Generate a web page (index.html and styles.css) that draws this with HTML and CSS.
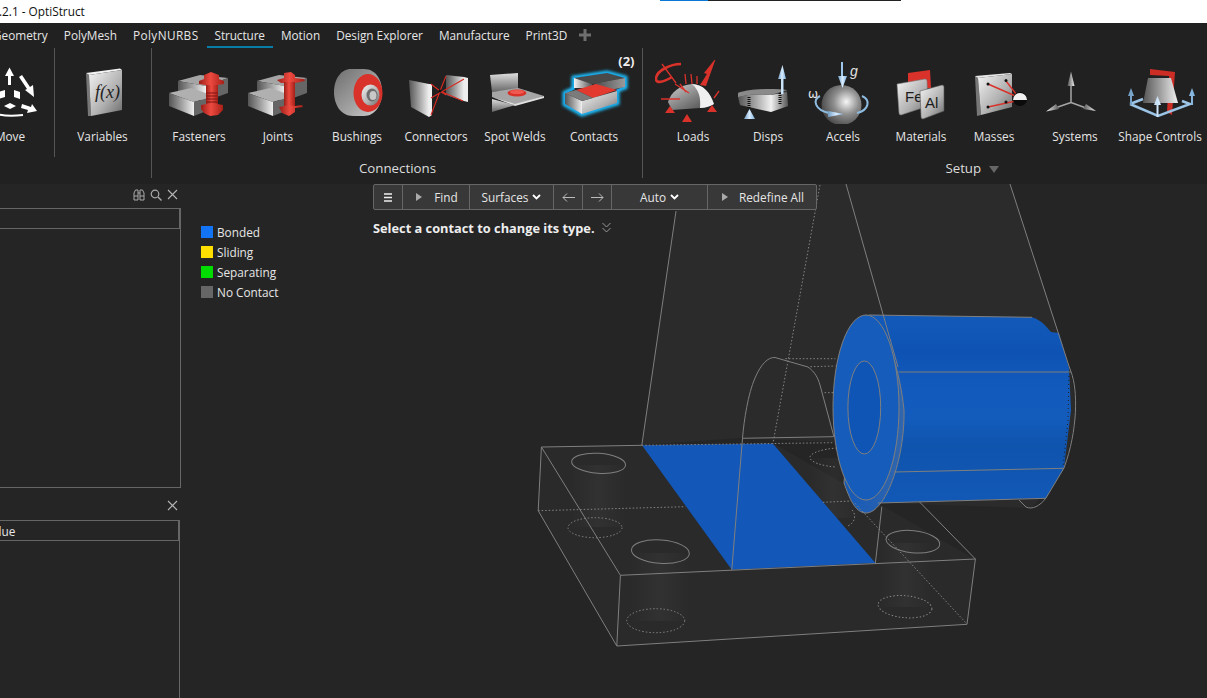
FILE: index.html
```html
<!DOCTYPE html>
<html lang="en">
<head>
<meta charset="utf-8">
<title>OptiStruct</title>
<link rel="stylesheet" href="styles.css">
</head>
<body>
<svg class="defs" width="0" height="0" aria-hidden="true">
  <defs>
    <linearGradient id="gh" x1="0" x2="1" y1="0" y2="0"><stop offset="0" stop-color="#555"/><stop offset=".55" stop-color="#a8a8a8"/><stop offset="1" stop-color="#f0f0f0"/></linearGradient>
    <linearGradient id="gr" x1="0" x2="1" y1="0" y2="0"><stop offset="0" stop-color="#f2f2f2"/><stop offset=".5" stop-color="#a5a5a5"/><stop offset="1" stop-color="#555"/></linearGradient>
    <linearGradient id="gv" x1="0" x2="0" y1="0" y2="1"><stop offset="0" stop-color="#dedede"/><stop offset="1" stop-color="#666"/></linearGradient>
    <linearGradient id="gd" x1="0" x2="1" y1="0" y2="1"><stop offset="0" stop-color="#f4f4f4"/><stop offset=".6" stop-color="#b0b0b0"/><stop offset="1" stop-color="#6a6a6a"/></linearGradient>
    <linearGradient id="gb" x1="0" x2="1" y1="0" y2="1"><stop offset="0" stop-color="#6e6e6e"/><stop offset=".6" stop-color="#a4a4a4"/><stop offset="1" stop-color="#d2d2d2"/></linearGradient>
    <linearGradient id="gt" x1="0" x2="1" y1="0" y2="0"><stop offset="0" stop-color="#444"/><stop offset="1" stop-color="#9a9a9a"/></linearGradient>
    <linearGradient id="dome" x1="0" x2="1" y1="0" y2="1"><stop offset="0" stop-color="#cfcfcf"/><stop offset=".55" stop-color="#7e7e7e"/><stop offset="1" stop-color="#454545"/></linearGradient>
    <linearGradient id="red" x1="0" x2="1" y1="0" y2="0"><stop offset="0" stop-color="#9a1e17"/><stop offset=".45" stop-color="#ee4a40"/><stop offset="1" stop-color="#a52018"/></linearGradient>
    <linearGradient id="blue" x1="0" x2="1" y1="0" y2="0"><stop offset="0" stop-color="#6f9cc4"/><stop offset=".5" stop-color="#d8ecff"/><stop offset="1" stop-color="#7fb0da"/></linearGradient>
    <radialGradient id="sph" cx=".62" cy=".42" r=".7"><stop offset="0" stop-color="#f6f6f6"/><stop offset=".45" stop-color="#8e8e8e"/><stop offset="1" stop-color="#3d3d3d"/></radialGradient>
    <linearGradient id="hole" x1="0" x2="1" y1="0" y2="0"><stop offset="0" stop-color="#fff" stop-opacity="0"/><stop offset=".5" stop-color="#fff" stop-opacity=".035"/><stop offset="1" stop-color="#fff" stop-opacity="0"/></linearGradient>
    <linearGradient id="rim" x1="0" x2="1" y1="0" y2="0"><stop offset="0" stop-color="#1459b8"/><stop offset="1" stop-color="#3166ad"/></linearGradient>
    <linearGradient id="bodyShade" x1="0" x2="0" y1="0" y2="1"><stop offset="0" stop-color="#125ab9"/><stop offset=".2" stop-color="#0e53b4"/><stop offset=".4" stop-color="#125bbd"/><stop offset=".55" stop-color="#135cbc"/><stop offset=".7" stop-color="#0f54ad"/><stop offset="1" stop-color="#1258b6"/></linearGradient>
    <filter id="glow" x="-30%" y="-30%" width="160%" height="160%"><feGaussianBlur stdDeviation="1.800"/></filter>
    <g id="blocks">
      <path d="M178 81 200 75 228 78 206 86Z" fill="#a5a5a5"/>
      <path d="M178 81 206 86V101L178 94Z" fill="url(#gh)"/>
      <path d="M206 86 228 78V93L206 101Z" fill="#666"/>
      <path d="M169 93 191 88 214 96 194 102Z" fill="#b0b0b0"/>
      <path d="M169 93 194 102V116L169 106Z" fill="url(#gh)"/>
      <path d="M194 102 214 96V108L194 116Z" fill="#666"/>
    </g>
  </defs>
</svg>

<header class="titlebar">
  <span class="title">.2.1 - OptiStruct</span>
  <span class="progress"><span class="progress-fill"></span></span>
</header>

<nav class="tabs">
  <span class="tab">Geometry</span>
  <span class="tab">PolyMesh</span>
  <span class="tab tab-wide">PolyNURBS</span>
  <span class="tab tab-active">Structure</span>
  <span class="tab">Motion</span>
  <span class="tab">Design Explorer</span>
  <span class="tab">Manufacture</span>
  <span class="tab">Print3D</span>
  <svg class="tab-plus" width="12" height="12" viewBox="0 0 12 12"><path d="M6 0V12M0 6H12" stroke="#6f6f6f" stroke-width="3"/></svg>
</nav>

<section class="ribbon">
  <div class="group group-move">
    <div class="tool">
      <svg class="icon" width="76" height="64" viewBox="-28 60 76 64">
        <path d="M9.500 67.500 14 76H11V85H8V76H5Z" fill="#fff"/>
        <path d="M19 77 22 75 30 87 33 85 34 97 25 90 27 89Z" fill="#fff"/>
        <path d="M-2 92 5 90V97L-2 99ZM14 90 20 92V99L14 97Z" fill="#fff"/>
        <path d="M10 103 16 106 10 109 4 106Z" fill="#fff"/>
        <path d="M22 104 31 107 32 104 37 111 27 113 28 110 21 108Z" fill="#fff"/>
        <path d="M-3 114C4 116 14 116 23 115" fill="none" stroke="#fff" stroke-width="2"/>
      </svg>
      <span class="tool-label">Move</span>
    </div>
  </div>
  <div class="group group-vars">
    <div class="tool">
      <svg class="icon" width="76" height="64" viewBox="64 60 76 64">
        <path d="M85 73 119 68.500 121 70 88 75Z" fill="#f2f2f2"/>
        <path d="M85 73 88 75 90 116 87 116Z" fill="#777"/>
        <path d="M88 75 121 70V110L90 116Z" fill="url(#gd)"/>
        <text class="fx" x="94" y="98">f(x)</text>
      </svg>
      <span class="tool-label">Variables</span>
    </div>
  </div>
  <div class="group group-conn">
    <div class="tools tools-conn">
      <div class="tool">
        <svg class="icon" width="76" height="64" viewBox="161 60 76 64">
          <use href="#blocks"/>
          <path d="M204 75 211 72 219 75V79L224 81V84L211 86 199 84V81L204 79Z" fill="url(#red)"/>
          <rect x="206" y="85" width="12" height="20" fill="url(#red)"/>
          <path d="M206 93H218M206 96H218M206 99H218M206 102H218" stroke="#7d1510" stroke-width="1"/>
          <path d="M201 105 212 103 223 105V110L218 115 210 116 204 113 201 109Z" fill="url(#red)"/>
        </svg>
        <span class="tool-label">Fasteners</span>
      </div>
      <div class="tool">
        <svg class="icon" width="76" height="64" viewBox="241 60 76 64">
          <use href="#blocks" x="80"/>
          <path d="M285 73 292 72 296 75V78L305 79 306 81 296 83H282L278 80 285 78Z" fill="url(#red)"/>
          <rect x="285" y="82" width="11" height="24" fill="url(#red)"/>
          <path d="M280 107 290 105 296 106 303 105 304 107 296 108V112L290 116 283 113Z" fill="url(#red)"/>
        </svg>
        <span class="tool-label">Joints</span>
      </div>
      <div class="tool">
        <svg class="icon" width="76" height="64" viewBox="320 60 76 64">
          <path d="M352 69H365C377 69 383 80 383 92 383 105 376 116 365 116H354C342 116 335 105 335 92 335 79 342 69 352 69Z" fill="url(#gb)"/>
          <ellipse cx="369" cy="93" rx="14.500" ry="19" fill="#d8322a"/>
          <ellipse cx="371.500" cy="95" rx="9" ry="10.500" fill="url(#gd)"/>
          <ellipse cx="373" cy="95" rx="5.500" ry="6.500" fill="#6d6d6d"/>
          <ellipse cx="374" cy="95.500" rx="3.500" ry="4.500" fill="#c8c8c8"/>
        </svg>
        <span class="tool-label">Bushings</span>
      </div>
      <div class="tool">
        <svg class="icon" width="76" height="64" viewBox="399 60 76 64">
          <path d="M410 80 430 84V117L412 107Z" fill="url(#gh)"/>
          <path d="M430 84 433 84V115L430 117Z" fill="#eee"/>
          <path d="M447 75 465 77V101L447 95Z" fill="url(#gh)"/>
          <path d="M465 77 469 78V102L465 101Z" fill="#eee"/>
          <path d="M432 84 441 91 447 76M432 115 441 91 447 95M432 98 465 79M441 91 464 101" fill="none" stroke="#d82a22" stroke-width="1.100"/>
          <circle cx="441" cy="91" r="1.500" fill="#111"/>
        </svg>
        <span class="tool-label">Connectors</span>
      </div>
      <div class="tool">
        <svg class="icon" width="76" height="64" viewBox="477 60 76 64">
          <path d="M490 75 518 73V90L492 92Z" fill="url(#gv)"/>
          <path d="M492 92 518 88 544 96 515 105 492 97Z" fill="#a6a6a6"/>
          <path d="M492 97 515 104 544 96V98L515 106Z" fill="#e0e0e0"/>
          <path d="M492 99 515 105 492 112Z" fill="url(#gv)"/>
          <ellipse cx="517" cy="93" rx="9.500" ry="3.500" fill="#d8322a"/>
          <ellipse cx="517" cy="92" rx="7" ry="2" fill="#ef5a50"/>
        </svg>
        <span class="tool-label">Spot Welds</span>
      </div>
      <div class="tool">
        <svg class="icon" width="76" height="64" viewBox="556 60 76 64">
          <path d="M574 78 607 73 625 78V87L617 90V103L582 114 565 104V93L574 89Z" fill="#1cc0ff" stroke="#1cc0ff" stroke-width="5" filter="url(#glow)"/>
          <path d="M574 78 607 73 625 78V87L617 90V103L582 114 565 104V93L574 89Z" fill="#2a2a2a" stroke="#19a5e8" stroke-width="1.400"/>
          <path d="M574 78 607 73 625 78 592 84Z" fill="#4a4a4a"/>
          <path d="M574 78 592 84 592 88 574 88Z" fill="url(#gr)"/>
          <path d="M592 84 625 78V87L610 90Z" fill="url(#gt)"/>
          <path d="M576 90 596 84 617 90 593 98Z" fill="#e33a30"/>
          <path d="M565 93 582 101V114L565 104Z" fill="url(#gh)"/>
          <path d="M582 101 617 91V103L582 114Z" fill="url(#gd)"/>
          <path d="M565 93 576 90 593 98 582 101Z" fill="#7b7b7b"/>
        </svg>
        <span class="tool-label">Contacts</span>
        <span class="badge">(2)</span>
      </div>
    </div>
    <div class="group-label">Connections</div>
  </div>
  <div class="group group-setup">
    <div class="tools tools-setup">
      <div class="tool">
        <svg class="icon" width="76" height="64" viewBox="655 60 76 64">
          <path d="M668 102C671 92 680 85 692 84 701 84 708 90 714 104L700 108 672 110Z" fill="url(#dome)"/>
          <path d="M714 104C710 92 704 85 692 84 699 90 701 98 700 108 706 108 711 106 714 104Z" fill="#efefef"/>
          <path d="M681 64C670 64 656 71 656 79 656 84 664 82 672 77" fill="none" stroke="#d8322a" stroke-width="2.600"/>
          <path d="M716 58 706 86 700 85 707 74 704 73Z" fill="#d8322a"/>
          <path d="M662 64 676 83M675 84 689 93M680 84 686 92M685 74 686 84M691 74 692 84M697 76 697 84M661 99H680M714 98 719 91" stroke="#d8322a" stroke-width="1.300"/>
          <path d="M670 106 675 113H665ZM687 114 692 122H682ZM712 105 717 112H707Z" fill="#d8322a"/>
        </svg>
        <span class="tool-label">Loads</span>
      </div>
      <div class="tool">
        <svg class="icon" width="76" height="64" viewBox="730 60 76 64">
          <path d="M738 93C748 89 770 88 787 90L788 106 771 112 740 105Z" fill="#3a3a3a"/>
          <path d="M738 97C748 94 760 94 771 95L771 112 740 105Z" fill="url(#gh)"/>
          <path d="M771 95 787 92 788 106 771 112Z" fill="url(#gr)"/>
          <path d="M738 93C748 89 770 88 787 90L771 95C760 94 748 94 738 97Z" fill="#8a8a8a"/>
          <path d="M749 97V109M780 93V105" stroke="#111" stroke-width="3" stroke-dasharray="1 1"/>
          <path d="M782.500 65 786 79H783.500V94H781V79H778Z" fill="url(#blue)"/>
          <path d="M749.500 109 755 119H744Z" fill="url(#blue)"/>
        </svg>
        <span class="tool-label">Disps</span>
      </div>
      <div class="tool">
        <svg class="icon" width="76" height="64" viewBox="805 60 76 64">
          <circle cx="841.500" cy="105" r="20" fill="url(#sph)"/>
          <path d="M820 96C812 100 815 110 829 113M862 96C871 100 869 110 857 113" fill="none" stroke="#8dbbe0" stroke-width="2"/>
          <path d="M828 111 844 114 828 117Z" fill="url(#blue)"/>
          <path d="M842 62V78" stroke="#9cc6ea" stroke-width="2"/>
          <path d="M838 76H847L842.500 88Z" fill="url(#blue)"/>
          <text class="sym" x="850" y="76">g</text>
          <text class="omega" x="808" y="98">ω</text>
        </svg>
        <span class="tool-label">Accels</span>
      </div>
      <div class="tool">
        <svg class="icon" width="76" height="64" viewBox="883 60 76 64">
          <path d="M908 73 930 70 931 88 908 88Z" fill="#d8322a"/>
          <path d="M897 84 925 79Q927 79 927 81L928 106 901 115Q899 115 899 113Z" fill="url(#gd)" stroke="#777" stroke-width=".6"/>
          <text class="plate" x="905" y="102">Fe</text>
          <path d="M920 91 942 85Q944 85 944 87V111L923 119Q921 119 921 117Z" fill="url(#gd)" stroke="#555" stroke-width=".6"/>
          <text class="plate" x="925" y="108">Al</text>
        </svg>
        <span class="tool-label">Materials</span>
      </div>
      <div class="tool">
        <svg class="icon" width="76" height="64" viewBox="956 60 76 64">
          <path d="M975 76 978 78 981 115 977 116Z" fill="#777"/>
          <path d="M975 76 1010 73 1012 74 978 78Z" fill="#e8e8e8"/>
          <path d="M978 78 1012 74V107L981 115Z" fill="url(#gd)"/>
          <path d="M988 84 1020 98M1006 81 1020 99M988 107 1020 100" stroke="#d8322a" stroke-width="1.400"/>
          <circle cx="988" cy="84" r="1.500" fill="#111"/><circle cx="1006" cy="80.500" r="1.500" fill="#111"/><circle cx="988" cy="107" r="1.500" fill="#111"/><circle cx="1006" cy="102" r="1.500" fill="#111"/>
          <circle cx="1020" cy="99" r="7" fill="#0b0b0b"/>
          <path d="M1013 100A7 7 0 0 1 1027 100Z" fill="#f2f2f2"/>
        </svg>
        <span class="tool-label">Masses</span>
      </div>
      <div class="tool">
        <svg class="icon" width="76" height="64" viewBox="1037 60 76 64">
          <path d="M1071 102.500V85M1071 102.500 1055 108M1071 102.500 1086 108" stroke="#a5a5a5" stroke-width="1.500"/>
          <path d="M1071 71.500 1074.500 86H1067.500Z" fill="url(#gh)"/>
          <path d="M1046 111.500 1056 104 1059 109Z" fill="url(#gr)"/>
          <path d="M1096 111 1083 109 1086 104Z" fill="url(#gh)"/>
        </svg>
        <span class="tool-label">Systems</span>
      </div>
      <div class="tool">
        <svg class="icon" width="76" height="64" viewBox="1122 60 76 64">
          <path d="M1150 69 1175 72 1172 115 1167 112 1169 76 1150 75Z" fill="#cc2e26"/>
          <path d="M1148 78H1171L1178 103H1143Z" fill="url(#gh)"/>
          <path d="M1130 104 1158 116 1190 104 1182 101M1130 104 1143 99" fill="none" stroke="#9cc4e6" stroke-width="2.500"/>
          <path d="M1131 88 1134 96H1132V105H1130V96H1128ZM1192 88 1195 96H1193V105H1191V96H1189ZM1157.500 96 1161 105H1158.500V117H1156.500V105H1154Z" fill="url(#blue)"/>
        </svg>
        <span class="tool-label">Shape Controls</span>
      </div>
    </div>
    <div class="group-label group-label-setup">Setup <span class="caret"></span></div>
  </div>
</section>

<main class="main">
  <svg class="model" width="1207" height="514" viewBox="0 184 1207 514" aria-hidden="true">
    <path d="M680 184H1010L1070 370 1077 413 1064 468 1032 508 878 503 833 442 742 438 642 445Z" fill="#2b2b2b"/>
    <path d="M541 447 642 445 773 443 975 559 967 624 617 646 538 511Z" fill="#2a2a2a"/>
    <rect x="571" y="465" width="55" height="62" fill="url(#hole)"/>
    <rect x="630" y="553" width="60" height="68" fill="url(#hole)"/>
    <rect x="879" y="543" width="53" height="64" fill="url(#hole)"/>
    <rect x="808" y="458" width="52" height="60" fill="url(#hole)"/>
    <path d="M642 445.300 773 443.700 875.400 563 731.800 569.700Z" fill="#1358b8"/>
    <path d="M866 315 1032 317.300C1042 320 1047 328 1051 332L1059 333 1069 368 1071 410 1064 468 1046 498 878 503 866 500Z" fill="url(#bodyShade)"/>
    <path d="M1069 372 1068 420 1063 467" fill="none" stroke="#222" stroke-dasharray="1 3"/>
    <path d="M866 315C885 320 900 370 904 410 905 460 885 513 866 513 855 513 849 497 844 483L850 407Z" fill="url(#rim)" stroke="#7f7f7f"/>
    <ellipse cx="866" cy="407.500" rx="33" ry="92.500" fill="#165dbb"/>
    <ellipse cx="864.300" cy="407.500" rx="16.400" ry="46.500" fill="#0f55b6"/>
    <g fill="none" stroke="#7f7f7f" stroke-width="1">
      <path d="M676 211 641.800 445.300M846 184 898 367M1010 184 1069.300 367"/>
      <path d="M541.400 447 641.800 445.300M541.400 447 538.200 510.700 616.800 646 967 624.300 975.400 559 620.400 575.300 616.800 646M541.400 447 620.400 575.300M975.400 559 919.300 501.700"/>
      <path d="M731.800 569.700 742.500 438.300 833.600 436.700M742.500 438.300C744 420 748 394 755 378 761 364 768 357 775 357.500L808 367C815 372 818 378 820 385L834 437"/>
      <path d="M875.400 563 881.800 506.700"/>
      <ellipse cx="866" cy="407.500" rx="33" ry="92.500"/>
      <ellipse cx="864.300" cy="407.500" rx="16.400" ry="46.500"/>
      <path d="M898.600 372H1071M894.300 472 1064 468.300M869 315 1032 317.300M878 503 1046 498.300"/>
      <path d="M1069.300 367 1071 371.700C1078 390 1078 430 1064 468L1046 498C1040 506 1032 510 1026 507L1019 500"/>
      <ellipse transform="rotate(4 598.600 463.300)" cx="598.600" cy="463.300" rx="27" ry="10"/>
      <ellipse transform="rotate(4 660.400 551.700)" cx="660.400" cy="551.700" rx="29" ry="11.700"/>
      <ellipse transform="rotate(6 912.900 541.700)" cx="912.900" cy="541.700" rx="27" ry="11"/>
    </g>
    <g fill="none" stroke="#858585" stroke-width="1" stroke-dasharray="1.500 2">
      <path d="M641.800 445.300 833.600 442.700M538.200 510.700 685.400 506.700M822.900 502.300 851 501M855 503.300 967 624M820 185 772.900 443.700M785.400 358.700H835.400M810.400 366.700 835.400 366M824.600 392.700H834"/>
      <ellipse cx="595" cy="527.700" rx="27" ry="10"/>
      <ellipse cx="655.700" cy="620.700" rx="29" ry="12"/>
      <ellipse transform="rotate(5 905 606.700)" cx="905" cy="606.700" rx="27" ry="11"/>
      <path d="M837 448C822 449 810 453 810 457.500 810 462 822 466 836 467M852 510C856 514 856 522 848 526"/>
    </g>
  </svg>

  <aside class="sidebar">
    <div class="panel panel-top">
      <div class="panel-head">
        <svg class="pico" width="12" height="12" viewBox="0 0 12 12"><path d="M1 4 2.500 1H5V11H1ZM11 4 9.500 1H7V11H11ZM5 4H7M1 7H5M7 7H11" fill="none" stroke="#aaa"/></svg>
        <svg class="pico" width="12" height="12" viewBox="0 0 12 12"><circle cx="5" cy="5" r="3.800" fill="none" stroke="#aaa" stroke-width="1.200"/><path d="M8 8 11.500 11.500" stroke="#aaa" stroke-width="1.400"/></svg>
        <svg class="pico" width="11" height="11" viewBox="0 0 11 11"><path d="M1 1 10 10M10 1 1 10" stroke="#b5b5b5" stroke-width="1.100"/></svg>
      </div>
      <div class="table-head"></div>
      <div class="table-body"></div>
    </div>
    <div class="panel panel-bottom">
      <div class="panel-head panel-head-tall">
        <svg class="pico" width="11" height="11" viewBox="0 0 11 11"><path d="M1 1 10 10M10 1 1 10" stroke="#b5b5b5" stroke-width="1.100"/></svg>
      </div>
      <div class="table-head"><span class="col-value">Value</span></div>
      <div class="table-body"></div>
    </div>
  </aside>

  <section class="viewport">
    <ul class="legend">
      <li class="legend-item"><span class="swatch swatch-bonded"></span>Bonded</li>
      <li class="legend-item"><span class="swatch swatch-sliding"></span>Sliding</li>
      <li class="legend-item"><span class="swatch swatch-separating"></span>Separating</li>
      <li class="legend-item"><span class="swatch swatch-none"></span>No Contact</li>
    </ul>
    <div class="command">
      <div class="toolbar">
        <span class="cell cell-menu"><svg width="8" height="9" viewBox="0 0 8 9"><path d="M0 1H8M0 4.500H8M0 8H8" stroke="#eee" stroke-width="1.600"/></svg></span>
        <span class="cell cell-find"><span class="play"></span>Find</span>
        <span class="cell cell-surf">Surfaces <svg class="chev" width="9" height="6" viewBox="0 0 9 6"><path d="M1 1 4.500 4.500 8 1" fill="none" stroke="#fff" stroke-width="1.800"/></svg></span>
        <span class="cell cell-arrow"><svg width="13" height="9" viewBox="0 0 13 9"><path d="M13 4.500H1M5 .5 1 4.500 5 8.500" fill="none" stroke="#bbb"/></svg></span>
        <span class="cell cell-arrow"><svg width="13" height="9" viewBox="0 0 13 9"><path d="M0 4.500H12M8 .5 12 4.500 8 8.500" fill="none" stroke="#bbb"/></svg></span>
        <span class="cell cell-auto">Auto <svg class="chev" width="9" height="6" viewBox="0 0 9 6"><path d="M1 1 4.500 4.500 8 1" fill="none" stroke="#fff" stroke-width="1.800"/></svg></span>
        <span class="cell cell-redefine"><span class="play"></span>Redefine All</span>
      </div>
      <div class="hint">Select a contact to change its type. <svg class="hint-chev" width="9" height="11" viewBox="0 0 9 11"><path d="M.5 1 4.500 5 8.500 1M.5 6 4.500 10 8.500 6" fill="none" stroke="#999"/></svg></div>
    </div>
  </section>
</main>
</body>
</html>
```

FILE: styles.css
```css
* { box-sizing: border-box; }
html, body { margin: 0; padding: 0; }
body {
  width: 1207px;
  height: 698px;
  overflow: hidden;
  background: #252525;
  color: #e6e6e6;
  font-family: "Open Sans", "Liberation Sans", sans-serif;
  font-size: 11.8px;
}
.defs { position: absolute; }

.titlebar {
  position: relative;
  height: 23px;
  background: #fff;
  color: #111;
  line-height: 23px;
}
.title { font-size: 11.8px; margin-left: -1px; }
.progress {
  position: absolute;
  top: 0;
  left: 660px;
  width: 241px;
  height: 1px;
  background: #222;
}
.progress-fill { display: block; width: 48px; height: 1px; background: #0a78d7; }

.tabs {
  display: flex;
  align-items: flex-start;
  gap: 16px;
  height: 25px;
  margin-left: -7px;
  background: #212121;
  padding-top: 3px;
}
.tab {
  position: relative;
  line-height: 18px;
  white-space: nowrap;
}
.tab-wide { letter-spacing: .4px; }
.tab-active { letter-spacing: -.1px; }
.tab-active::after {
  content: "";
  position: absolute;
  left: -8px;
  right: -8px;
  top: 20px;
  height: 2px;
  background: #0a7ca8;
}
.tab-plus { margin: 3px 0 0 -4px; }

.ribbon {
  display: flex;
  height: 136px;
  width: 1320px;
  background: #212121;
}
.group { position: relative; flex: none; }
.group::after {
  content: "";
  position: absolute;
  top: 0;
  right: 0;
  width: 1px;
  height: 130px;
  background: #555;
}
.group-move { width: 55px; }
.group-move::after { height: 109px; }
.group-vars { width: 97px; }
.group-conn { width: 491px; }
.group-setup { width: 658px; }
.group-setup::after { display: none; }

.tools { display: grid; }
.tools-conn { grid-template-columns: repeat(6, 79px); padding-left: 7.5px; }
.tools-setup { grid-template-columns: 75px 75px 75px 81px 65px 97px 73px; padding-left: 12.5px; }

.tool {
  position: relative;
  display: flex;
  flex-direction: column;
  align-items: center;
  padding-top: 12px;
}
.group-move .tool { width: 20px; }
.group-vars .tool { width: 95px; }
.icon { display: block; flex: none; }
.tool-label {
  margin-top: 4px;
  line-height: 16px;
  white-space: nowrap;
}
.group-label {
  margin-top: 15px;
  font-size: 13.300px;
  line-height: 18px;
  text-align: center;
  color: #dcdcdc;
}
.caret {
  display: inline-block;
  margin-left: 4px;
  border-left: 5px solid transparent;
  border-right: 5px solid transparent;
  border-top: 7px solid #666;
}
.badge {
  position: absolute;
  top: 5px;
  right: -1px;
  font-weight: 700;
  font-size: 13px;
  color: #eee;
  line-height: 16px;
}
.fx { font-family: "Liberation Serif", serif; font-style: italic; font-size: 18px; fill: #222; }
.sym { font-family: "Liberation Sans", sans-serif; font-style: italic; font-size: 14px; fill: #e4e4e4; }
.omega { font-family: "DejaVu Sans", sans-serif; font-size: 12px; fill: #e4e4e4; }
.plate { font-family: "Liberation Sans", sans-serif; font-size: 15px; fill: #1c1c1c; }

.main {
  position: relative;
  display: flex;
  height: 514px;
  width: 1207px;
}
.model { position: absolute; left: 0; top: 0; }

.sidebar {
  position: relative;
  flex: none;
  width: 181px;
  display: flex;
  flex-direction: column;
}
.panel-top { height: 304px; display: flex; flex-direction: column; }
.panel-bottom { flex: 1; display: flex; flex-direction: column; }
.panel-head {
  height: 24px;
  display: flex;
  align-items: center;
  justify-content: flex-end;
  gap: 5px;
  padding: 0 3px 3px 0;
  flex: none;
}
.panel-head-tall { height: 32px; padding: 3px 3px 0 0; }
.pico { display: block; }
.table-head {
  flex: none;
  height: 21px;
  border: 1px solid #666;
  border-left: 0;
  border-right: 2px solid #666;
  line-height: 21px;
  overflow: hidden;
}
.col-value { margin-left: -15px; }
.table-body {
  flex: 1;
  border-right: 1px solid #666;
}
.panel-top .table-body { border-bottom: 1px solid #666; }
.panel-bottom .table-head { margin-right: 1px; }
.panel-bottom .table-body { margin-right: 1px; }

.viewport {
  position: relative;
  flex: 1;
  display: flex;
  padding-left: 20px;
}
.legend {
  list-style: none;
  flex: none;
  width: 172px;
  margin: 38px 0 0;
  padding: 0;
}
.legend-item {
  display: flex;
  align-items: center;
  gap: 4px;
  height: 20px;
}
.swatch { width: 12px; height: 12px; flex: none; }
.swatch-bonded { background: #1273f5; }
.swatch-sliding { background: #ffdf00; }
.swatch-separating { background: #00dc00; }
.swatch-none { background: #666; }

.command { flex: none; }
.toolbar {
  display: flex;
  width: 444px;
  height: 26px;
  background: #383838;
  border: 1px solid #666;
  border-radius: 2px;
}
.cell {
  display: flex;
  align-items: center;
  justify-content: center;
  gap: 4px;
  border-right: 1px solid #666;
  flex: none;
}
.cell:last-child { border-right: 0; flex: 1; }
.cell-menu { width: 29px; }
.cell-find { width: 67px; gap: 12px; padding-left: 2px; }
.cell-surf { width: 84px; }
.cell-arrow { width: 29px; }
.cell-auto { width: 96px; }
.cell-redefine { gap: 11px; padding-left: 2px; }
.play {
  width: 0;
  height: 0;
  border-left: 6px solid #aaa;
  border-top: 4px solid transparent;
  border-bottom: 4px solid transparent;
}
.chev { display: block; }
.hint {
  margin-top: 10px;
  font-weight: 700;
  font-size: 12.800px;
  line-height: 16px;
  color: #eee;
  white-space: nowrap;
}
.hint-chev { margin-left: 4px; }
```
